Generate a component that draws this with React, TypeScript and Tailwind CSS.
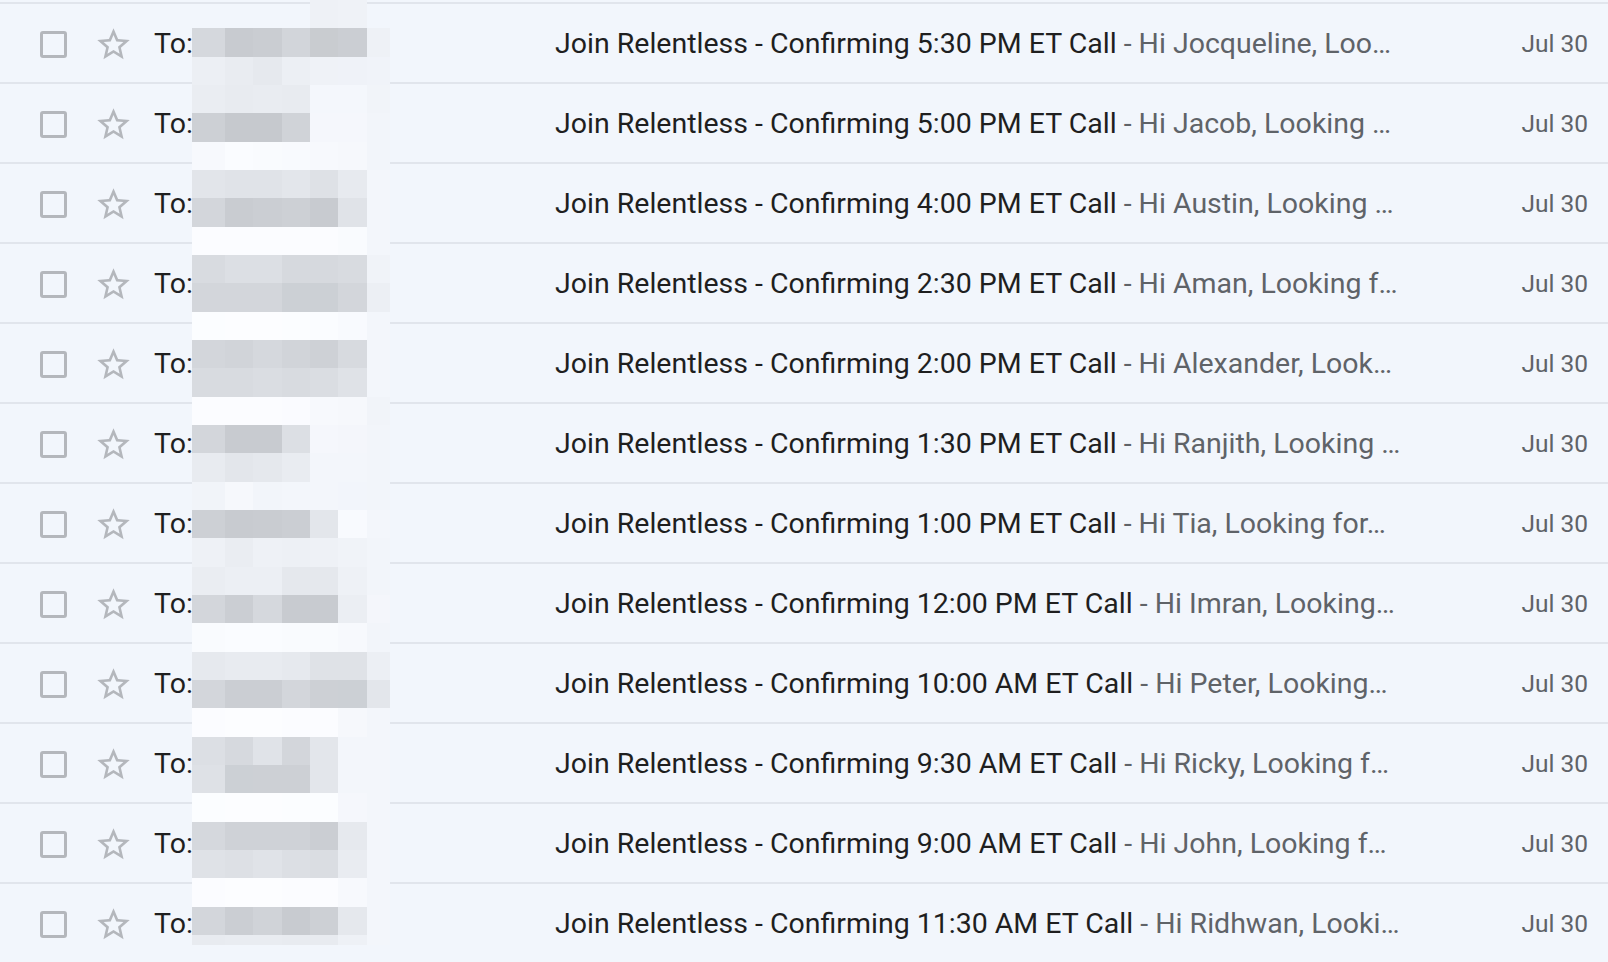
const rows = [
  { time: "5:30 PM", snippet: "Hi Jocqueline, Loo…" },
  { time: "5:00 PM", snippet: "Hi Jacob, Looking …" },
  { time: "4:00 PM", snippet: "Hi Austin, Looking …" },
  { time: "2:30 PM", snippet: "Hi Aman, Looking f…" },
  { time: "2:00 PM", snippet: "Hi Alexander, Look…" },
  { time: "1:30 PM", snippet: "Hi Ranjith, Looking …" },
  { time: "1:00 PM", snippet: "Hi Tia, Looking for…" },
  { time: "12:00 PM", snippet: "Hi Imran, Looking…" },
  { time: "10:00 AM", snippet: "Hi Peter, Looking…" },
  { time: "9:30 AM", snippet: "Hi Ricky, Looking f…" },
  { time: "9:00 AM", snippet: "Hi John, Looking f…" },
  { time: "11:30 AM", snippet: "Hi Ridhwan, Looki…" },
];

// pixelated redaction over the recipient column
const mosaic = [
  ["transparent", "transparent", "transparent", "transparent", "#eef1f6", "#eff2f7", "transparent"],
  ["#d5d8dd", "#c8cbd0", "#cacdd2", "#d2d5da", "#c9ccd0", "#cbced3", "#eef1f6"],
  ["#eceff4", "#e9ecf1", "#e6e9ee", "#eceff4", "#eff2f7", "#eff2f8", "#f0f3f9"],
  ["#eaedf2", "#e8ebf0", "#e9ecf1", "#e8ebf0", "#f4f7fc", "#f4f7fc", "#f1f4f9"],
  ["#cdd0d5", "#c6c9ce", "#c6c9ce", "#d0d3d8", "#f5f7fc", "#f5f7fc", "#f2f5fa"],
  ["#f7f9fd", "#fafcff", "#f9fbfe", "#f8fafe", "#f7f9fd", "#f6f8fc", "#f2f5fa"],
  ["#e2e5ea", "#e0e3e8", "#e0e3e8", "#e3e6eb", "#dee1e6", "#e7eaef", "#f3f6fb"],
  ["#d3d6db", "#c9ccd1", "#cbced3", "#cdd0d5", "#c8cbd0", "#e0e3e8", "#f3f6fb"],
  ["#fbfcff", "#fbfcff", "#fbfcff", "#fbfcff", "#fbfcff", "#f9fbfe", "#f3f6fb"],
  ["#d8dbe0", "#dcdfe4", "#dcdfe4", "#d6d9de", "#d6d9de", "#d8dbe0", "#f0f3f8"],
  ["#d3d6db", "#d3d6db", "#d3d6db", "#ccd0d5", "#ccd0d5", "#d3d6db", "#eceff4"],
  ["#fbfdff", "#fcfdff", "#fcfdff", "#fbfdff", "#fafcff", "#f8fafe", "#f3f6fb"],
  ["#d3d6db", "#d1d4d9", "#d5d8dd", "#d1d4d9", "#ced1d6", "#d7dadf", "#f3f6fb"],
  ["#d8dbe0", "#d8dbe0", "#dadde2", "#d8dbe0", "#dadde2", "#dfe2e7", "#f3f6fb"],
  ["#fbfcff", "#fbfcff", "#fbfcff", "#fafbff", "#f7f9fd", "#f6f8fc", "#f1f4f9"],
  ["#d3d6db", "#c8cbd0", "#c8cbd0", "#dcdfe4", "#f5f7fc", "#f4f6fb", "#f2f5fa"],
  ["#e8ebf0", "#e3e6eb", "#e5e8ed", "#e9ecf1", "#f3f6fb", "#f3f6fb", "#f2f5fa"],
  ["#f1f4f9", "#f6f8fc", "#f2f5fa", "#f3f6fb", "#f3f6fb", "#f2f5fb", "#f2f5fa"],
  ["#cdd0d5", "#c8cbd0", "#c9ccd1", "#cbced3", "#e3e6eb", "#f8fafe", "#f3f6fb"],
  ["#eef1f6", "#eaedf2", "#eef1f6", "#edf0f5", "#eef1f6", "#f0f3f8", "#f2f5fa"],
  ["#eaedf2", "#eceff4", "#eceff4", "#e5e8ed", "#e5e8ed", "#eef1f6", "#f2f5fa"],
  ["#d3d6db", "#cbced3", "#d5d8dd", "#c8cbd0", "#c8cbd0", "#ebeef3", "#f4f6fb"],
  ["#f9fbfe", "#fafcff", "#fafcff", "#f9fbfe", "#f9fbfe", "#f7f9fd", "#f2f5fa"],
  ["#e6e9ee", "#e8ebf0", "#e8ebf0", "#e6e9ee", "#dfe2e7", "#dfe2e7", "#eceff4"],
  ["#d3d6db", "#cbced3", "#cbced3", "#d3d6db", "#cdd0d5", "#ccd0d5", "#e3e6eb"],
  ["#fbfcff", "#fcfdff", "#fcfdff", "#fbfcff", "#fbfcff", "#f6f8fc", "#f3f6fb"],
  ["#dcdfe4", "#d6d9de", "#e0e3e8", "#d3d6db", "#e3e6eb", "#f3f6fb", "#f3f6fb"],
  ["#dee1e6", "#ccd0d5", "#cdd0d5", "#cdd0d5", "#e3e6eb", "#f3f6fb", "#f3f6fb"],
  ["#fbfdff", "#fcfdff", "#fcfdff", "#fbfdff", "#fbfdff", "#f5f7fc", "#f3f6fb"],
  ["#d5d8dd", "#cfd2d7", "#cfd2d7", "#cfd2d7", "#cbced3", "#e6e9ee", "#f3f6fb"],
  ["#dfe2e7", "#dde0e5", "#e0e3e8", "#dcdfe4", "#dadde2", "#e9ecf1", "#f3f6fb"],
  ["#fbfcff", "#fcfdff", "#fcfdff", "#fbfcff", "#fbfcff", "#f7f9fd", "#f3f6fb"],
  ["#d3d6db", "#cbced3", "#d0d3d8", "#c8cbd0", "#cdd0d5", "#e5e8ed", "#f3f6fb"],
  ["#e8ebf0", "#e9ecf1", "#e9ecf1", "#e8ebf0", "#e8ebf0", "#eef1f6", "#f3f6fb"],
];

function StarIcon() {
  return (
    <svg
      viewBox="0 0 24 24"
      className="ml-[27px] h-[39px] w-[39px] shrink-0"
      fill="#b4b7bc"
    >
      <path d="M22 9.24l-7.19-.62L12 2 9.19 8.63 2 9.24l5.46 4.73L5.82 21 12 17.27 18.18 21l-1.63-7.03L22 9.24zM12 15.4l-3.76 2.27 1-4.28-3.32-2.88 4.38-.38L12 6.1l1.71 4.04 4.38.38-3.32 2.88 1 4.28L12 15.4z" />
    </svg>
  );
}

export default function App() {
  return (
    <div className="relative h-[962px] w-full overflow-hidden bg-[#f2f6fc] pt-[2px] font-['Roboto',sans-serif]">
      <div className="border-t-2 border-[#e1e5ec]">
        {rows.map((row) => (
          <div
            key={row.time}
            className="flex h-[80px] items-center border-b-2 border-[#e1e5ec] pl-[40px] pr-[20px] pt-[3px]"
          >
            <span className="h-[27px] w-[27px] shrink-0 rounded-[3px] border-[3px] border-[#b4b7bc]" />
            <StarIcon />
            <div className="ml-[21px] w-[401px] shrink-0 text-[28.5px] text-[#1f1f1f]">
              To:
            </div>
            <div className="min-w-0 flex-1 truncate text-[28.5px]">
              <span className="text-[#1f1f1f]">
                Join Relentless - Confirming {row.time} ET Call
              </span>
              <span className="text-[#5f6368]"> - {row.snippet}</span>
            </div>
            <div className="ml-4 shrink-0 text-[24.5px] text-[#5f6368]">
              Jul 30
            </div>
          </div>
        ))}
      </div>

      <div className="absolute left-[192px] top-0 grid grid-cols-[33px_28px_29px_28px_28px_29px_23px] auto-rows-[28.33px]">
        {mosaic.flatMap((line, r) =>
          line.map((color, c) => (
            <div
              key={`${r}-${c}`}
              className={r === mosaic.length - 1 ? "h-[10px]" : ""}
              style={{ backgroundColor: color }}
            />
          ))
        )}
      </div>
    </div>
  );
}
